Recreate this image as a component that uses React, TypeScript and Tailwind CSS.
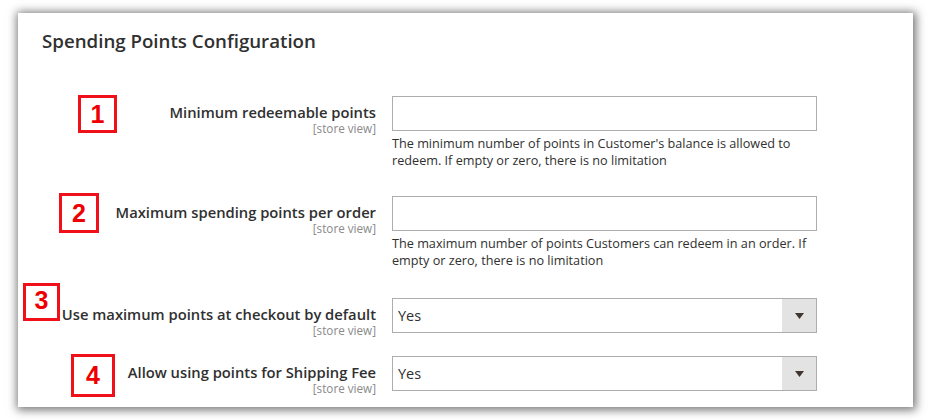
const rows = [
  {
    label: "Minimum redeemable points",
    type: "text",
    note: "The minimum number of points in Customer's balance is allowed to redeem. If empty or zero, there is no limitation",
    mt: "mt-0",
  },
  {
    label: "Maximum spending points per order",
    type: "text",
    note: "The maximum number of points Customers can redeem in an order. If empty or zero, there is no limitation",
    mt: "mt-[28px]",
  },
  {
    label: "Use maximum points at checkout by default",
    type: "select",
    mt: "mt-[30px]",
  },
  {
    label: "Allow using points for Shipping Fee",
    type: "select",
    mt: "mt-[19px]",
  },
];

// annotation boxes drawn over the screenshot
const marks = [
  { n: "1", cls: "left-[60px] top-[82px] h-[38px] w-[39px]" },
  { n: "2", cls: "left-[41px] top-[180px] h-[40px] w-[40px]" },
  { n: "3", cls: "left-[5px] top-[270px] h-[38px] w-[37px] items-start pt-[2px]" },
  { n: "4", cls: "left-[53px] top-[341px] h-[43px] w-[44px]" },
];

function Select() {
  return (
    <div className="flex h-[35px] w-[425px] border border-[#adadad] bg-white">
      <div className="flex flex-1 items-center pl-[5px] text-[14.5px] text-[#303030]">Yes</div>
      <div className="flex w-[34px] items-center justify-center bg-[#e3e3e3]">
        <svg width="9" height="6" viewBox="0 0 9 6">
          <path d="M0 0 H9 L4.5 6 Z" fill="#41362f" />
        </svg>
      </div>
    </div>
  );
}

export default function App() {
  return (
    <div className="h-[420px] w-[931px] bg-white pl-[18px] pt-[13px] font-['Open_Sans',sans-serif]">
      <div className="relative h-[394px] w-[895px] bg-white shadow-[1px_1px_9px_2px_rgba(0,0,0,0.55)]">
        <h2 className="pl-[24px] pt-[16px] text-[18.7px] font-semibold leading-[24px] text-[#303030]">
          Spending Points Configuration
        </h2>

        <div className="mt-[43px] flex flex-col">
          {rows.map((r) => (
            <div key={r.label} className={`flex items-start ${r.mt}`}>
              <div className="w-[358px] pt-[6px] text-right">
                <div className="whitespace-nowrap text-[14.75px] font-semibold leading-[20px] text-[#303030]">
                  {r.label}
                </div>
                <div className="text-[11.7px] leading-[13px] text-[#8a8a8a]">[store view]</div>
              </div>
              <div className="ml-[16px] w-[425px]">
                {r.type === "text" ? (
                  <div className="h-[35px] w-[425px] border border-[#adadad] bg-white" />
                ) : (
                  <Select />
                )}
                {r.note && (
                  <p className="mt-[4px] w-[425px] text-[12.66px] leading-[16.5px] text-[#303030]">{r.note}</p>
                )}
              </div>
            </div>
          ))}
        </div>

        {marks.map((m) => (
          <div
            key={m.n}
            className={`absolute flex justify-center items-center border-[3px] border-[#f0101a] bg-white font-['Liberation_Sans',Arial,sans-serif] text-[25px] font-bold leading-none text-[#ee0000] ${m.cls}`}
          >
            {m.n}
          </div>
        ))}
      </div>
    </div>
  );
}
